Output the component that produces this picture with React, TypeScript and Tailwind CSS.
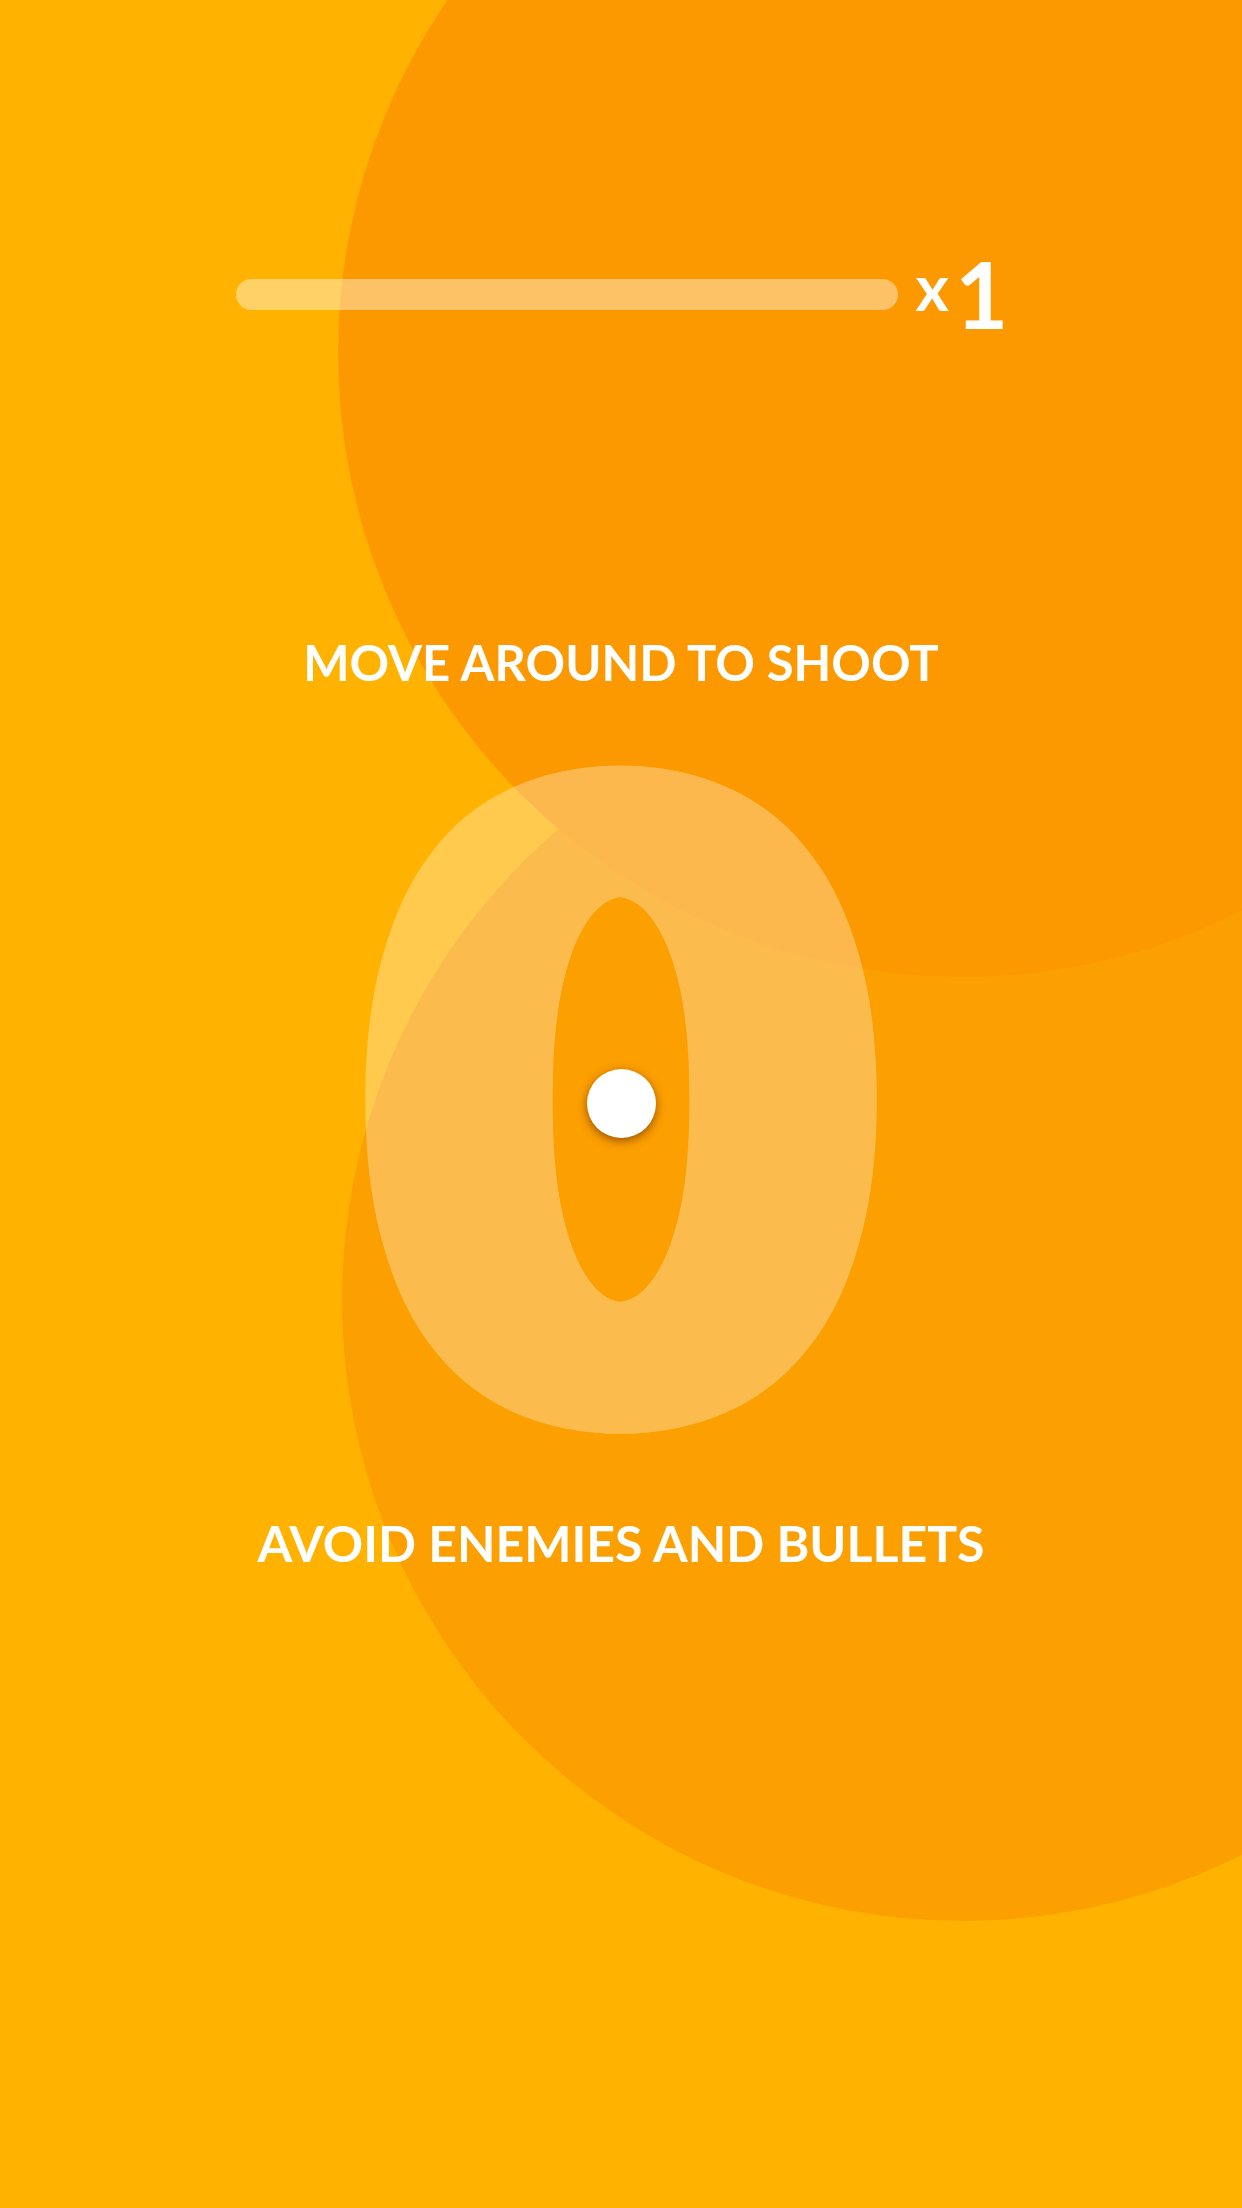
// halo of offsets that fattens the score digit, wider sideways than up/down
const scoreHalo = (() => {
  const out: string[] = [];
  for (const f of [1, 0.5]) {
    for (let i = 0; i < 24; i++) {
      const a = (i / 24) * Math.PI * 2;
      const dx = (Math.cos(a) * 36 * f).toFixed(1);
      const dy = (Math.sin(a) * 18 * f).toFixed(1);
      out.push(`${dx}px ${dy}px 0 #fff`);
    }
  }
  return out.join(", ");
})();

export default function App() {
  const font = { fontFamily: "Lato, 'Open Sans', sans-serif" };

  return (
    <div
      className="relative w-[1242px] h-[2208px] overflow-hidden bg-[#ffb300] text-white"
      style={font}
    >
      {/* background blobs */}
      <div className="absolute left-[342px] top-[679px] w-[1242px] h-[1242px] rounded-full bg-[#fc9f00]" />
      <div className="absolute left-[338px] top-[-271px] w-[1248px] h-[1248px] rounded-full bg-[#fd9900]" />

      <div className="relative flex flex-col items-center pt-[245px]">
        {/* combo bar */}
        <div className="flex items-start ml-[2px]">
          <div className="mt-[34px] w-[662px] h-[31px] rounded-full bg-white/40" />
          <span className="ml-[18px] mt-[10px] text-[64px] font-bold leading-none">x</span>
          <span className="ml-[6px] mt-[3px] text-[92px] font-bold leading-none">1</span>
        </div>

        <p className="mt-[298px] text-[49px] font-bold leading-none">MOVE AROUND TO SHOOT</p>

        {/* score + player */}
        <div className="relative mt-[57px] w-full h-[670px]">
          <div className="opacity-30">
            <div
              className="text-center text-[853px] font-black leading-[670px] text-white scale-x-[0.968] select-none"
              style={{ textShadow: scoreHalo }}
            >
              0
            </div>
          </div>
          <div className="absolute left-[587px] top-[325px] w-[69px] h-[69px] rounded-full bg-white shadow-[0_3px_10px_rgba(120,55,0,0.75)]" />
        </div>

        <p className="mt-[104px] text-[50px] font-bold leading-none">AVOID ENEMIES AND BULLETS</p>
      </div>
    </div>
  );
}
